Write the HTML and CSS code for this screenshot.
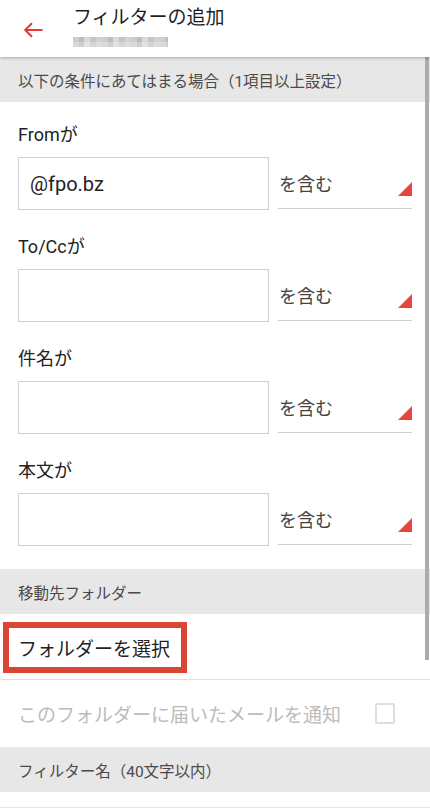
FILE: index.html
```html
<!DOCTYPE html>
<html lang="ja">
<head>
<meta charset="utf-8">
<title>フィルターの追加</title>
<link rel="stylesheet" href="styles.css">
</head>
<body>
<div class="app">
  <header class="topbar">
    <span class="back">
      <svg width="20" height="16" viewBox="0 0 20 16"><path d="M19.5 8H2.2M9 1.2L2.2 8L9 14.8" fill="none" stroke="#e53935" stroke-width="2" stroke-linecap="butt" stroke-linejoin="miter"/></svg>
    </span>
    <div class="titles">
      <div class="title">フィルターの追加</div>
      <div class="subtitle"></div>
    </div>
  </header>

  <div class="section-head">以下の条件にあてはまる場合（1項目以上設定）</div>

  <div class="conditions">
    <div class="field">
      <div class="label">Fromが</div>
      <div class="row">
        <div class="input">@fpo.bz</div>
        <div class="select">を含む<span class="tri"></span></div>
      </div>
    </div>
    <div class="field">
      <div class="label">To/Ccが</div>
      <div class="row">
        <div class="input"></div>
        <div class="select">を含む<span class="tri"></span></div>
      </div>
    </div>
    <div class="field">
      <div class="label">件名が</div>
      <div class="row">
        <div class="input"></div>
        <div class="select">を含む<span class="tri"></span></div>
      </div>
    </div>
    <div class="field">
      <div class="label">本文が</div>
      <div class="row">
        <div class="input"></div>
        <div class="select">を含む<span class="tri"></span></div>
      </div>
    </div>
  </div>

  <div class="section-head">移動先フォルダー</div>
  <div class="folder-row">
    <div class="folder-btn">フォルダーを選択</div>
  </div>
  <div class="notify-row">
    <span class="notify-text">このフォルダーに届いたメールを通知</span>
    <span class="checkbox"></span>
  </div>

  <div class="section-head">フィルター名（40文字以内）</div>
  <div class="name-row"></div>

  <div class="scrollbar"></div>
</div>
</body>
</html>
```

FILE: styles.css
```css
* { box-sizing: border-box; }
html, body { margin: 0; padding: 0; background: #fff; }
body {
  font-family: "Roboto", "Noto Sans CJK JP", sans-serif;
  color: #222;
  width: 430px;
  height: 810px;
  overflow: hidden;
}
.app { position: relative; width: 430px; height: 810px; overflow: hidden; }

.topbar {
  position: relative;
  z-index: 2;
  height: 57px;
  background: #fff;
  display: flex;
  align-items: flex-start;
  padding-left: 23px;
  box-shadow: 0 1px 3px rgba(0,0,0,0.28);
}
.back { display: flex; margin-top: 22px; width: 20px; height: 16px; }
.titles { margin-left: 30px; padding-top: 6px; }
.title { font-size: 19px; line-height: 24px; color: #1e1e1e; }
.subtitle {
  margin-top: 7px;
  width: 95px;
  height: 10px;
  background:
    linear-gradient(180deg, rgba(255,255,255,0) 0 50%, rgba(255,255,255,0.25) 50% 100%),
    repeating-linear-gradient(90deg, #cdcdcd 0 6px, #bdbdbd 6px 11px, #d9d9d9 11px 17px, #c6c6c6 17px 23px, #d2d2d2 23px 29px);
}

.section-head {
  height: 45px;
  background: #e7e7e7;
  padding-left: 18px;
  display: flex;
  align-items: center;
  font-size: 15.5px;
  color: #4a4a4a;
}

.conditions { padding: 1px 0 18px; }
.field { padding: 20px 18px 5px; }
.label { font-size: 18px; line-height: 24px; color: #222; margin-bottom: 10px; }
.row { display: flex; height: 53px; }
.input {
  width: 251px;
  height: 53px;
  border: 1px solid #cfcfcf;
  padding-left: 11px;
  display: flex;
  align-items: center;
  font-size: 20px;
  color: #222;
}
.select {
  position: relative;
  flex: 1;
  margin-left: 9px;
  height: 52px;
  border-bottom: 1px solid #cfcfcf;
  display: flex;
  align-items: center;
  padding-left: 1px;
  font-size: 18px;
  color: #444;
}
.tri {
  position: absolute;
  right: 0;
  bottom: 12px;
  width: 0;
  height: 0;
  border-left: 14px solid transparent;
  border-bottom: 14px solid #e8463f;
}

.folder-row {
  padding: 8px 0 6px 3px;
  border-bottom: 1px solid #dedede;
}
.folder-btn {
  width: 184px;
  height: 51px;
  border: 6px solid #db4538;
  padding-left: 9px;
  display: flex;
  align-items: center;
  font-size: 19px;
  color: #222;
}

.notify-row {
  height: 67px;
  display: flex;
  align-items: center;
  justify-content: space-between;
  padding: 0 35px 0 18px;
}
.notify-text { font-size: 19px; color: #bcbcbc; }
.checkbox {
  width: 20px;
  height: 21px;
  border: 2px solid #dedede;
  border-radius: 2px;
}

.name-row {
  height: 40px;
  margin-top: 15px;
  border-top: 1px solid #e6e6e6;
}

.scrollbar {
  position: absolute;
  top: 57px;
  right: 1px;
  width: 4px;
  height: 603px;
  background: #ababab;
  z-index: 1;
}
```
